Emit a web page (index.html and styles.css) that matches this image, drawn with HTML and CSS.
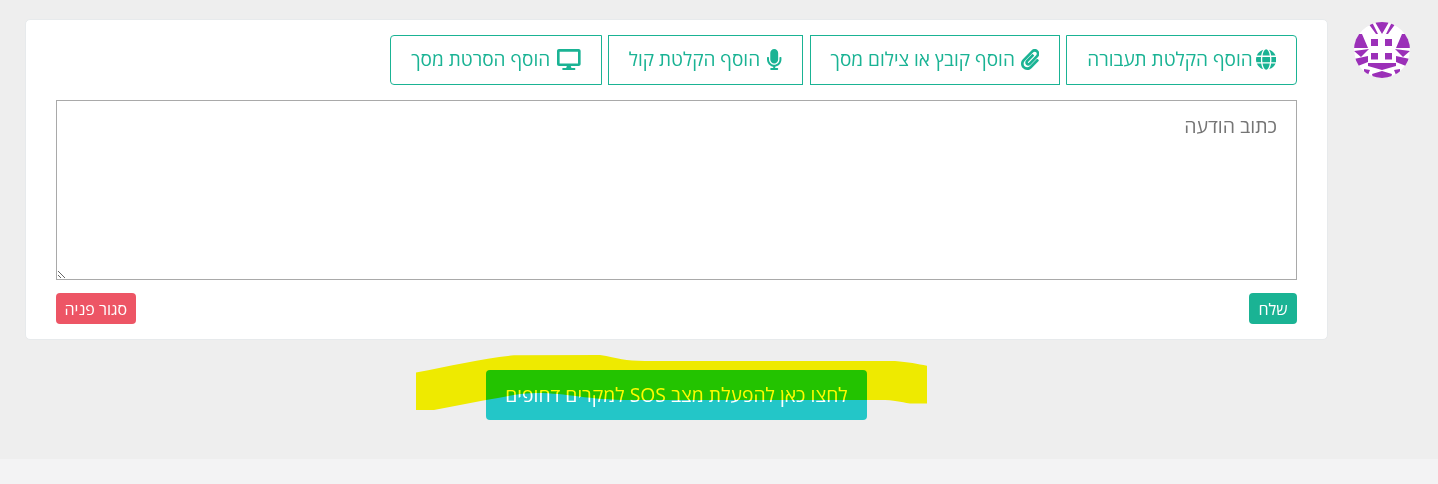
FILE: index.html
```html
<!DOCTYPE html>
<html lang="he" dir="rtl">
<head>
    <title>פניה</title>
    <link rel="stylesheet" href="styles.css">
</head>
<body>
    <div class="page">
        <div class="avatar-col">
            <svg class="avatar" viewBox="0 0 56 56">
                <circle cx="28" cy="28" r="28" fill="#fff"/>
                <g fill="#9b30b8">
                    <path d="M21 0h14l-7 12zM14 1l4-1 6 12h-2zM42 1l-4-1-6 12h2z"/>
                    <path d="M0 12h8l6 14H0zM56 12h-8l-6 14h14z"/>
                    <path d="M0 29l15-2-8 8zM56 29l-15-2 8 8z"/>
                    <path d="M0 37l14-3v6L4 44zM56 37l-14-3v6l10 4z"/>
                    <path d="M14 41h28v3l-14 4-14-4zM18 52l10-3 10 3-1 4H19z"/>
                    <path d="M10 47l6 1-2 5-4-2zM46 47l-6 1 2 5 4-2z"/>
                    <rect x="17" y="17" width="7" height="7"/>
                    <rect x="31" y="17" width="7" height="7"/>
                    <rect x="17" y="31" width="7" height="6.5"/>
                    <rect x="31" y="31" width="7" height="6.5"/>
                </g>
            </svg>
        </div>
        <div class="content">
            <div class="card">
                <div class="toolbar">
                    <button class="btn-outline">
                        <svg class="icon" viewBox="0 0 496 512"><path d="M336.5 160C322 70.7 287.8 8 248 8s-74 62.7-88.5 152h177zM152 256c0 22.2 1.2 43.5 3.3 64h185.3c2.1-20.5 3.3-41.8 3.3-64s-1.2-43.5-3.3-64H155.3c-2.1 20.5-3.3 41.8-3.3 64zm324.7-96c-28.6-67.9-86.5-120.4-158-141.6 24.4 33.8 41.2 84.7 50 141.6h108zM177.2 18.4C105.8 39.6 47.8 92.1 19.3 160h108c8.7-56.9 25.5-107.8 49.9-141.6zM487.4 192H372.7c2.1 21 3.3 42.5 3.3 64s-1.2 43-3.3 64h114.6c5.5-20.5 8.6-41.8 8.6-64s-3.1-43.5-8.5-64zM120 256c0-21.5 1.2-43 3.3-64H8.6C3.2 212.5 0 233.8 0 256s3.2 43.5 8.6 64h114.6c-2-21-3.2-42.5-3.2-64zm39.5 96c14.5 89.3 48.7 152 88.5 152s74-62.7 88.5-152h-177zm159.3 141.6c71.4-21.2 129.4-73.7 158-141.6h-108c-8.8 56.9-25.6 107.8-50 141.6zM19.3 352c28.6 67.9 86.5 120.4 158 141.6-24.4-33.8-41.2-84.7-50-141.6h-108z"/></svg>
                        הוסף הקלטת תעבורה
                    </button>
                    <button class="btn-outline wide">
                        <svg class="icon" viewBox="0 0 448 512"><path d="M43.246 466.142c-58.43-60.289-57.341-157.511 1.386-217.581L254.392 34c44.316-45.332 116.351-45.336 160.671 0 43.89 44.894 43.943 117.329 0 162.276L232.214 383.128c-29.855 30.537-78.633 30.111-107.982-.998-28.275-29.97-27.368-77.473 1.452-106.953l143.743-146.835c6.182-6.314 16.312-6.422 22.626-.241l22.861 22.379c6.315 6.182 6.422 16.312.241 22.626L171.427 319.927c-4.932 5.045-5.236 13.428-.648 18.292 4.372 4.634 11.245 4.711 15.688.165l182.849-186.851c19.613-20.062 19.613-52.725-.011-72.798-19.189-19.627-49.957-19.637-69.154 0L90.39 293.295c-34.763 35.56-35.299 93.12-1.191 128.313 34.01 35.093 88.985 35.137 123.058.286l172.06-175.999c6.177-6.319 16.307-6.433 22.626-.256l22.877 22.364c6.319 6.177 6.434 16.307.256 22.626l-172.06 175.998c-59.576 60.938-155.943 60.216-214.77-.485z"/></svg>
                        הוסף קובץ או צילום מסך
                    </button>
                    <button class="btn-outline spaced">
                        <svg class="icon" viewBox="0 0 352 512"><path d="M176 352c53.02 0 96-42.98 96-96V96c0-53.02-42.98-96-96-96S80 42.98 80 96v160c0 53.02 42.98 96 96 96zm160-160h-16c-8.84 0-16 7.16-16 16v48c0 74.8-64.49 134.82-140.79 127.38C96.71 376.89 48 317.11 48 250.3V208c0-8.84-7.16-16-16-16H16c-8.84 0-16 7.16-16 16v40.16c0 89.64 63.97 169.55 152 181.69V464H96c-8.84 0-16 7.16-16 16v16c0 8.84 7.16 16 16 16h160c8.84 0 16-7.16 16-16v-16c0-8.84-7.16-16-16-16h-56v-33.77C285.71 418.47 352 344.9 352 256v-48c0-8.84-7.16-16-16-16z"/></svg>
                        הוסף הקלטת קול
                    </button>
                    <button class="btn-outline spaced">
                        <svg class="icon" viewBox="0 0 576 512"><path d="M528 0H48C21.5 0 0 21.5 0 48v320c0 26.5 21.5 48 48 48h192l-16 48h-72c-13.3 0-24 10.7-24 24s10.7 24 24 24h272c13.3 0 24-10.7 24-24s-10.7-24-24-24h-72l-16-48h192c26.5 0 48-21.5 48-48V48c0-26.5-21.5-48-48-48zm-16 352H64V64h448v288z"/></svg>
                        הוסף הסרטת מסך
                    </button>
                </div>
                <textarea class="message" placeholder="כתוב הודעה"></textarea>
                <div class="actions">
                    <button class="btn btn-send">שלח</button>
                    <button class="btn btn-close">סגור פניה</button>
                </div>
            </div>
            <div class="sos-row">
                <button class="btn-sos">לחצו כאן להפעלת מצב SOS למקרים דחופים</button>
            </div>
        </div>
        <svg class="marker" width="1438" height="459" viewBox="0 0 1438 459">
            <path d="M416 372.6C450 366 485 358 514 355.3L600 355C618 358 625 361 645 361L895 361C908 362 918 364 927 365.700V403.500H910C900 402 895 400 880 400H630C590 400 565 393 538 393C520 393 503 397 486 400L434 410H416z"/>
        </svg>
    </div>
    <div class="footer"></div>
</body>
</html>
```

FILE: styles.css
```css
* {
    box-sizing: border-box;
}
body {
    margin: 0;
    font-family: "Open Sans", "Liberation Sans", sans-serif;
    font-size: 16px;
    background-color: #f3f3f4;
}
.page {
    position: relative;
    display: flex;
    height: 459px;
    padding-top: 19px;
    padding-left: 25px;
    background-color: #eeeeee;
}
.avatar-col {
    width: 110px;
    flex-shrink: 0;
    padding-top: 3px;
    padding-right: 28px;
}
.avatar {
    display: block;
    width: 56px;
    height: 56px;
    border-radius: 50%;
}
.content {
    flex: 1;
}
.card {
    padding: 15px 30px;
    background-color: #fff;
    border: 1px solid #e7eaec;
    border-radius: 5px;
}
.toolbar {
    display: flex;
    gap: 6px;
    margin-bottom: 15px;
}
.btn-outline {
    display: flex;
    align-items: center;
    justify-content: center;
    gap: 3px;
    height: 50px;
    padding: 0 20px 2px;
    font-family: inherit;
    font-size: 19px;
    color: #1ab394;
    background-color: #fff;
    border: 1px solid #1ab394;
    border-radius: 0;
}
.btn-outline.wide {
    gap: 6px;
    margin-left: 1px;
}
.btn-outline.spaced {
    gap: 7px;
}
.btn-outline:first-child {
    border-radius: 0 4px 4px 0;
}
.btn-outline:last-child {
    border-radius: 4px 0 0 4px;
}
.icon {
    height: 21px;
    fill: #1ab394;
}
.message {
    display: block;
    width: 100%;
    height: 180px;
    padding: 11px 19px;
    font-family: inherit;
    font-size: 19.5px;
    border: 1px solid #a9a9a9;
    border-radius: 0;
}
.actions {
    display: flex;
    justify-content: space-between;
    margin-top: 13px;
}
.btn {
    height: 31px;
    font-family: inherit;
    font-size: 16px;
    color: #fff;
    border: 0;
    border-radius: 4px;
}
.btn-send {
    padding: 0 9.5px;
    background-color: #1ab394;
}
.btn-close {
    padding: 0 8.5px;
    background-color: #ed5565;
}
.sos-row {
    display: flex;
    justify-content: center;
    margin-top: 30px;
}
.btn-sos {
    width: 381px;
    height: 50px;
    padding-bottom: 2px;
    font-family: inherit;
    font-size: 19.35px;
    color: #fff;
    background-color: #23c6c8;
    border: 0;
    border-radius: 4px;
}
.marker {
    position: absolute;
    top: 0;
    left: 0;
    mix-blend-mode: multiply;
    fill: #fffb00;
    pointer-events: none;
}
.footer {
    height: 25px;
}
```
